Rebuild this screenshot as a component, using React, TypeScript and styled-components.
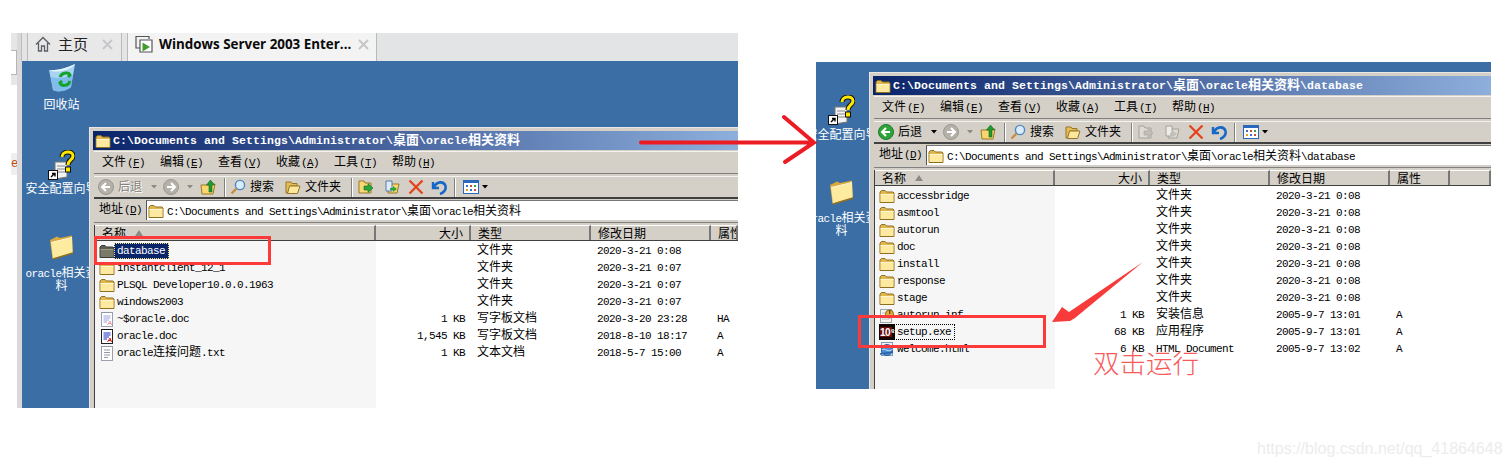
import React from "react";
import styled, { createGlobalStyle } from "styled-components";

const GlobalStyle = createGlobalStyle`
  html, body { margin: 0; padding: 0; background: #fff; }
  #root { width: 1510px; height: 467px; overflow: hidden; }
`;

const MONO = `"Liberation Mono", "DejaVu Sans Mono", monospace`;
const HAN = `"Noto Sans CJK SC", "Liberation Sans", sans-serif`;

const Page = styled.div`
  position: relative;
  width: 1510px;
  height: 467px;
  background: #fff;
  overflow: hidden;
  font-family: ${MONO};
  font-size: 11px;
  letter-spacing: -0.6px;
  color: #000;
`;

const Shot = styled.section<{ $x: number; $y: number; $w: number; $h: number }>`
  position: absolute;
  left: ${(p) => p.$x}px;
  top: ${(p) => p.$y}px;
  width: ${(p) => p.$w}px;
  height: ${(p) => p.$h}px;
  display: flex;
  overflow: hidden;
`;

const SideStrip = styled.aside`
  width: 11px;
  flex: none;
  display: flex;
  background: #d9d9d9;
`;
const SideColumn = styled.div`
  width: 6px;
  display: flex;
  flex-direction: column;
  background: #fff;
`;
const SidePart = styled.div<{ $h?: number; $kind: "gray" | "box" | "blank" | "hint" }>`
  height: ${(p) => (p.$h ? `${p.$h}px` : "auto")};
  flex: ${(p) => (p.$h ? "none" : "1")};
  box-sizing: border-box;
  overflow: hidden;
  background: ${(p) => (p.$kind === "gray" ? "#e6e6e6" : p.$kind === "hint" ? "#eeeeee" : "#fff")};
  border-right: ${(p) => (p.$kind === "box" ? "1px solid #b5b5b5" : "0")};
  border-top: ${(p) => (p.$kind === "box" ? "1px solid #b5b5b5" : "0")};
  border-bottom: ${(p) => (p.$kind === "box" ? "1px solid #b5b5b5" : "0")};
  line-height: 22px;
  color: #c04a10;
  font-size: 12px;
  text-align: right;
`;

const MainColumn = styled.div`
  flex: 1;
  min-width: 0;
  display: flex;
  flex-direction: column;
`;

const TabStrip = styled.nav`
  height: 28px;
  flex: none;
  display: flex;
  gap: 5px;
  padding-left: 5px;
  background: #e3e4e6;
  border-left: 1px solid #bdbdbd;
  margin-left: -1px;
`;
const Tab = styled.div<{ $active?: boolean }>`
  width: ${(p) => (p.$active ? 250 : 95)}px;
  box-sizing: border-box;
  display: flex;
  align-items: center;
  padding: 0 0 6px 7px;
  background: ${(p) => (p.$active ? "#f3f3f3" : "#e8e8e9")};
  border-left: 1px solid #b9b9b9;
  border-right: 1px solid #b9b9b9;
  letter-spacing: 0;
`;
const HomeLabel = styled.span`
  margin-left: 7px;
  width: 44px;
  font: 400 15px/18px ${HAN};
  color: #222;
`;
const ActiveLabel = styled.span`
  margin-left: 6px;
  width: 199px;
  white-space: nowrap;
  font: 700 13.4px/20px "Open Sans", "Liberation Sans", sans-serif;
  color: #0a0a0a;
`;

const Desktop = styled.div`
  position: relative;
  flex: 1;
  min-height: 0;
  background: #3a6ea5;
  overflow: hidden;
`;
const DesktopItem = styled.div<{ $x: number; $y: number }>`
  position: absolute;
  left: ${(p) => p.$x}px;
  top: ${(p) => p.$y}px;
  width: 75px;
  display: flex;
  flex-direction: column;
  align-items: center;
`;
const DesktopGlyph = styled.div<{ $shift: number }>`
  margin-right: ${(p) => p.$shift}px;
`;

const Explorer = styled.div<{ $x: number; $y: number }>`
  position: absolute;
  left: ${(p) => p.$x}px;
  top: ${(p) => p.$y}px;
  right: 0;
  bottom: 0;
  box-sizing: border-box;
  padding: 3px 0 0 3px;
  display: flex;
  flex-direction: column;
  background: #d4d0c8;
  border-top: 1px solid #e8e8e8;
  border-left: 1px solid #e8e8e8;
`;
const TitleBar = styled.header`
  height: 19px;
  flex: none;
  box-sizing: border-box;
  margin-bottom: 1px;
  display: flex;
  align-items: center;
  gap: 2px;
  padding-left: 2px;
  background: linear-gradient(to right, #0a246a, #8eafdc);
  color: #fff;
  font-weight: 700;
  font-size: 11.5px;
  letter-spacing: 0.1px;
  white-space: nowrap;
`;
const Bars = styled.div`
  flex: 1;
  min-height: 0;
  margin-left: 1px;
  display: flex;
  flex-direction: column;
`;
const MenuBar = styled.div`
  height: 23px;
  flex: none;
  box-sizing: border-box;
  margin-bottom: 2px;
  padding-left: 8px;
  display: flex;
  align-items: center;
  border-top: 1px solid #f4f3ef;
  border-bottom: 1px solid #808080;
`;
const MenuItem = styled.span`
  width: 58px;
  flex: none;
  white-space: nowrap;
`;
const Accel = styled.span`
  margin-left: 1px;
  & u { text-underline-offset: 1px; }
`;
const Toolbar = styled.div`
  height: 23px;
  flex: none;
  box-sizing: border-box;
  padding-left: 4px;
  display: flex;
  align-items: center;
  border-top: 1px solid #f4f3ef;
  border-bottom: 2px solid #404040;
`;
const ToolSlot = styled.span<{ $ml: number }>`
  display: flex;
  align-items: center;
  flex: none;
  margin-left: ${(p) => p.$ml}px;
`;
const ToolLabel = styled.span<{ $ml: number; $off?: boolean }>`
  flex: none;
  margin: 1px 0 0 ${(p) => p.$ml}px;
  color: ${(p) => (p.$off ? "#85827a" : "#000")};
  text-shadow: ${(p) => (p.$off ? "1px 1px 0 #fff" : "none")};
`;
const ToolSep = styled.span<{ $ml: number }>`
  width: 2px;
  height: 19px;
  flex: none;
  margin-left: ${(p) => p.$ml}px;
  background: linear-gradient(to right, #808080 50%, #fff 50%);
`;
const AddressBar = styled.div`
  height: 23px;
  flex: none;
  margin-bottom: 3px;
  display: flex;
  border-bottom: 1px solid #808080;
  box-sizing: content-box;
`;
const AddressLabel = styled.span`
  width: 47px;
  flex: none;
  padding-left: 5px;
  line-height: 23px;
  white-space: nowrap;
`;
const AddressInput = styled.div`
  flex: 1;
  margin: 1px 0 2px;
  display: flex;
  align-items: center;
  gap: 3px;
  padding-left: 1px;
  background: #fff;
  border-left: 1px solid #555;
  border-top: 1px solid #777;
  white-space: nowrap;
`;
const AddressText = styled.span`
  padding-top: 2px;
`;
const ListPane = styled.div<{ $name: number }>`
  flex: 1;
  min-height: 0;
  margin-top: -1px;
  border-left: 1px solid #404040;
  display: flex;
  flex-direction: column;
  background: linear-gradient(to right, #f6f6f6 ${(p) => p.$name}px, #fff ${(p) => p.$name}px);
`;
const HeaderRow = styled.div<{ $cols: string }>`
  height: 16px;
  flex: none;
  margin-bottom: 1px;
  display: grid;
  grid-template-columns: ${(p) => p.$cols};
  background: #d4d0c8;
  border-bottom: 1px solid #404040;
  box-sizing: border-box;
`;
const HeaderCell = styled.div<{ $align?: "right" }>`
  box-sizing: border-box;
  display: flex;
  align-items: center;
  gap: 9px;
  overflow: hidden;
  white-space: nowrap;
  padding: 0 6px 0 7px;
  justify-content: ${(p) => (p.$align === "right" ? "flex-end" : "flex-start")};
  border-top: 1px solid #fff;
  border-right: 2px solid #777;
  line-height: 14px;
`;
const Row = styled.div<{ $cols: string }>`
  height: 17px;
  flex: none;
  display: grid;
  grid-template-columns: ${(p) => p.$cols};
  align-items: center;
  white-space: nowrap;
`;
const NameCell = styled.div`
  display: flex;
  align-items: center;
  padding-left: 4px;
  min-width: 0;
`;
const NameLabel = styled.span<{ $state?: "selected" | "focus" }>`
  margin-left: -1px;
  padding: 0 3px 0 2px;
  line-height: 14px;
  border: 1px ${(p) => (p.$state ? "dotted" : "solid")}
    ${(p) => (p.$state === "selected" ? "#f2e27a" : p.$state === "focus" ? "#000" : "transparent")};
  background: ${(p) => (p.$state === "selected" ? "#0a246a" : "transparent")};
  color: ${(p) => (p.$state === "selected" ? "#fff" : "#000")};
`;
const SizeCell = styled.div`
  text-align: right;
  padding-right: 6px;
`;
const TextCell = styled.div`
  padding-left: 6px;
`;
const HanRun = styled.span<{ $size?: number }>`
  font-family: ${HAN};
  font-size: ${(p) => p.$size ?? 12}px;
  letter-spacing: 0;
  line-height: 0;
`;
const DesktopLabel = styled.div<{ $gap: number }>`
  margin-top: ${(p) => p.$gap}px;
  width: 75px;
  color: #fff;
  text-align: center;
  line-height: 12.5px;
`;

const Highlight = styled.div<{ $x: number; $y: number; $w: number; $h: number }>`
  position: absolute;
  left: ${(p) => p.$x}px;
  top: ${(p) => p.$y}px;
  width: ${(p) => p.$w}px;
  height: ${(p) => p.$h}px;
  box-sizing: border-box;
  border: 3px solid #fc3a3a;
`;
const Overlay = styled.svg`
  position: absolute;
  left: 0;
  top: 0;
  pointer-events: none;
`;
const Note = styled.div`
  position: absolute;
  left: 1093px;
  top: 345px;
  font: 300 26.5px/34px ${HAN};
  letter-spacing: 0;
  color: #f85a5a;
`;
const Watermark = styled.div`
  position: absolute;
  left: 1257px;
  top: 439px;
  font: 400 16px/20px "Liberation Sans", Arial, sans-serif;
  letter-spacing: 0;
  color: #ececec;
`;

const Mixed = ({ text, han }: { text: string; han?: number }) => (
  <>
    {text.split(/([\u4e00-\u9fff]+)/).map((part, i) =>
      /[\u4e00-\u9fff]/.test(part) ? (
        <HanRun key={i} $size={han}>
          {part}
        </HanRun>
      ) : (
        <React.Fragment key={i}>{part}</React.Fragment>
      )
    )}
  </>
);

const Svg = ({ s = 16, h, children }: { s?: number; h?: number; children: React.ReactNode }) => (
  <svg width={s} height={h ?? s} viewBox={`0 0 ${s} ${h ?? s}`} style={{ flex: "none", display: "block" }}>
    {children}
  </svg>
);

const Folder = ({ dark }: { dark?: boolean }) => (
  <Svg>
    <path d="M1 4 2.5 2.5H6L7.5 4H14L15 5V14.5H1Z" fill={dark ? "#5d5d52" : "#e2b64e"} stroke={dark ? "#3a3a36" : "#8f7020"} />
    <path d="M1.5 6.5H14.5V14H1.5Z" fill={dark ? "#7b7a68" : "#fde9a0"} />
    <path d="M1.5 6.5H14.5" stroke={dark ? "#9a9a88" : "#fff6cf"} />
    <path d="M1 14.5H15" stroke={dark ? "#3a3a36" : "#8f7020"} />
  </Svg>
);
const BigFolder = () => (
  <Svg s={26}>
    <path d="M2 6 9 2.5 12 4 24 1.5 25 19 4.5 25Z" fill="#d9a93c" />
    <path d="M3 8.5 24 3.5 24.5 18.5 5 24.5Z" fill="#fdeb9f" />
    <path d="M3 8.5 24 3.5" stroke="#fff8d6" />
    <path d="M5 25 25 19" stroke="#927022" strokeWidth="1.4" />
  </Svg>
);
const Recycle = () => (
  <Svg s={30} h={30}>
    <path d="M2 7C8 8 20 5 28 1L24 24C20 28 10 30 6 27Z" fill="#a9d3f3" />
    <path d="M2 7C8 8 20 5 28 1 25 7 8 11 2 7Z" fill="#e6f4fd" />
    <path d="M6 27C10 30 20 28 24 24L26 12C18 15 10 16 4 14Z" fill="#6fb2e8" opacity=".7" />
    <path d="M13 14C15 9 22 9 23 12L21 14M23 18C21 24 14 23 13 20L15 18" fill="none" stroke="#12a32b" strokeWidth="3" />
  </Svg>
);
const Security = () => (
  <Svg s={28} h={31}>
    <path d="M8 12H20V27L8 29Z" fill="#f3f3f3" stroke="#777" />
    <path d="M10 16H18M10 19H18M10 22H18" stroke="#888" />
    <path d="M15 7C15 1 26 0 26 6C26 10 21 10 21 15" fill="none" stroke="#111" strokeWidth="5" />
    <path d="M15 7C15 1 26 0 26 6C26 10 21 10 21 15" fill="none" stroke="#ffe800" strokeWidth="3" />
    <rect x="18.5" y="17" width="5" height="5" fill="#ffe800" stroke="#111" />
    <rect x="1.5" y="20.5" width="9" height="9" fill="#fff" stroke="#111" />
    <path d="M4 27 7.5 23.5M5 23.5H8V26.5" fill="none" stroke="#000" strokeWidth="1.4" />
  </Svg>
);
const NavCircle = ({ on, flip }: { on?: boolean; flip?: boolean }) => (
  <Svg>
    <circle cx="8" cy="8" r="7.5" fill={on ? "#2fa33a" : "#b4b1a9"} stroke={on ? "#1d7a28" : "#9a978f"} />
    <path
      d={flip ? "M8 4 12 8 8 12M12 8H4" : "M8 4 4 8 8 12M4 8H12"}
      fill="none"
      stroke="#fff"
      strokeWidth="2"
    />
  </Svg>
);
const Caret = ({ off }: { off?: boolean }) => (
  <Svg s={6} h={4}>
    <path d="M0 0H6L3 3.5Z" fill={off ? "#8d8a82" : "#000"} />
  </Svg>
);
const UpFolder = () => (
  <Svg>
    <path d="M1 6H9L15 5 13 15H2Z" fill="#f9d66f" stroke="#9a7a22" />
    <path d="M9 13V6H6.500L10.500 1 14.500 6H12V13Z" fill="#1f9c30" stroke="#0f6a1c" strokeWidth=".6" />
  </Svg>
);
const Search = () => (
  <Svg>
    <circle cx="10" cy="6" r="4.6" fill="#d8ecfb" stroke="#4f86c4" strokeWidth="1.4" />
    <path d="M6.500 9.500 1.500 14.500" stroke="#c68d3f" strokeWidth="2.4" />
  </Svg>
);
const Folders = () => (
  <Svg>
    <path d="M1 3H6L7 4.500H12V7H5L3 14H1Z" fill="#e6bd55" stroke="#95762a" />
    <path d="M4.500 7H15L12.500 14.500H2.500Z" fill="#fde79a" stroke="#95762a" />
  </Svg>
);
const MoveTo = ({ off }: { off?: boolean }) => (
  <Svg>
    <path d="M1 2H6L7 4H13V14H1Z" fill={off ? "#dedbd4" : "#f7d873"} stroke={off ? "#a5a29a" : "#98782a"} />
    <path d="M6 7H10V4.500L15 9 10 13.500V11H6Z" fill={off ? "#c2bfb7" : "#2aa53a"} stroke={off ? "#a5a29a" : "#116f20"} strokeWidth=".6" />
  </Svg>
);
const CopyTo = ({ off }: { off?: boolean }) => (
  <Svg>
    <path d="M6 5H15L13 14H4Z" fill={off ? "#dedbd4" : "#f7d873"} stroke={off ? "#a5a29a" : "#98782a"} />
    <path d="M2 2H8V12H2Z" fill={off ? "#eeece7" : "#dfeafa"} stroke={off ? "#a5a29a" : "#5c78a8"} />
    <path d="M6 9H9V7L13 10 9 13V11H6Z" fill={off ? "#c2bfb7" : "#2aa53a"} />
  </Svg>
);
const Delete = () => (
  <Svg>
    <path d="M1.500 1.500 14.500 14.500M14.500 1.500 1.500 14.500" stroke="#e4421c" strokeWidth="2.3" />
  </Svg>
);
const Undo = () => (
  <Svg>
    <path d="M2 3V9H8" fill="none" stroke="#1668c8" strokeWidth="2.4" />
    <path d="M3 8C6 2 13 2 14.500 7C15.500 11 12 14 9 15" fill="none" stroke="#1668c8" strokeWidth="2.6" />
  </Svg>
);
const Views = () => (
  <Svg>
    <rect x=".5" y="1.5" width="15" height="13" fill="#fff" stroke="#2a68bd" />
    <rect x="1" y="2" width="14" height="2" fill="#2a68bd" />
    <rect x="3" y="6" width="2" height="2" fill="#3a6fd0" />
    <rect x="7" y="6" width="2" height="2" fill="#d04a3a" />
    <rect x="11" y="6" width="2" height="2" fill="#3a9f4a" />
    <rect x="3" y="10" width="2" height="2" fill="#e0a030" />
    <rect x="7" y="10" width="2" height="2" fill="#3a6fd0" />
    <rect x="11" y="10" width="2" height="2" fill="#d04a3a" />
  </Svg>
);
const DocIcon = ({ kind }: { kind: "temp" | "word" | "text" }) => (
  <Svg>
    <rect x="2.5" y="1.5" width="11" height="14" fill="#fff" stroke={kind === "word" ? "#222" : "#9aa0ad"} />
    <path d="M3 1.500H13" stroke={kind === "word" ? "#000" : "#8a8f9a"} strokeDasharray="1 1" />
    {kind === "text" ? (
      <path d="M5 5H11M5 7.500H11M5 10H11M5 12.500H9" stroke="#8f97a8" />
    ) : (
      <>
        <path d="M4.500 5H11.500M4.500 7H11.500M4.500 9H10M4.500 11H8" stroke={kind === "word" ? "#1426c8" : "#9aa4e0"} />
        <path d="M8.500 14 11 10 12.500 14M9.500 12.500H12" fill="none" stroke={kind === "word" ? "#e01818" : "#ef9a9a"} />
      </>
    )}
  </Svg>
);
const InfIcon = () => (
  <Svg>
    <rect x="1.5" y="2.5" width="11" height="13" fill="#f7f7f2" stroke="#a0a4ac" />
    <path d="M3 6H10M3 9H9M3 12H10" stroke="#b9bdc6" />
    <circle cx="10.5" cy="7" r="4" fill="#e7b23b" stroke="#8b6a1a" />
    <rect x="10" y="3" width="1.4" height="4" fill="#6a4f10" />
  </Svg>
);
const SetupIcon = () => (
  <Svg>
    <rect width="16" height="16" fill="#140505" />
    <rect x="1" y="3" width="12" height="10" fill="#8a1010" opacity=".75" />
    <text x="1" y="12" fontFamily="Liberation Sans, sans-serif" fontSize="10" fontWeight="700" fill="#fff" letterSpacing="-.5">
      10
    </text>
    <text x="12" y="8" fontFamily="Liberation Sans, sans-serif" fontSize="6" fontWeight="700" fill="#fff" letterSpacing="0">
      g
    </text>
  </Svg>
);
const HtmlIcon = () => (
  <Svg>
    <rect x="2.5" y="1.5" width="11" height="13" fill="#eef3fb" stroke="#8097bc" />
    <circle cx="8" cy="9" r="5.5" fill="#4c8ed8" stroke="#2a5fa8" />
    <path d="M3 9C6 6 10 13 13.500 8" stroke="#cfe6fb" fill="none" />
    <path d="M1 13 14 11" stroke="#2a5fa8" strokeWidth="1.6" />
  </Svg>
);
const HomeGlyph = () => (
  <Svg>
    <path d="M1 8.500 8 1.500 15 8.500M3.500 7V15H6.500V10H9.500V15H12.500V7" fill="none" stroke="#5a5f66" strokeWidth="1.3" />
  </Svg>
);
const VmGlyph = () => (
  <Svg s={18}>
    <path d="M5 13H1V1.500H14V4" fill="none" stroke="#555" strokeWidth="1.2" />
    <path d="M5 5H17V17H5Z" fill="#fff" stroke="#555" strokeWidth="1.2" />
    <path d="M7.500 7.500 15 12 7.500 16.500Z" fill="#3f9f2d" />
  </Svg>
);
const CloseX = () => (
  <Svg s={11}>
    <path d="M1 1 10 10M10 1 1 10" stroke="#c5c6c8" strokeWidth="1.8" />
  </Svg>
);
const SortUp = () => (
  <Svg s={8} h={6}>
    <path d="M4 0 8 6H0Z" fill="#8c8a84" />
  </Svg>
);

type FileRow = {
  icon: React.ReactNode;
  name: string;
  size?: string;
  type: string;
  date: string;
  attr?: string;
  state?: "selected" | "focus";
};

const MENU: [string, string][] = [
  ["文件", "F"],
  ["编辑", "E"],
  ["查看", "V"],
  ["收藏", "A"],
  ["工具", "T"],
  ["帮助", "H"],
];

const Window = ({
  x,
  y,
  path,
  cols,
  nameWidth,
  extraHeader,
  rows,
  ready,
}: {
  x: number;
  y: number;
  path: string;
  cols: string;
  nameWidth: number;
  extraHeader?: boolean;
  rows: FileRow[];
  ready?: boolean;
}) => (
  <Explorer $x={x} $y={y}>
    <TitleBar>
      <Folder />
      <span>
        <Mixed text={path} han={13} />
      </span>
    </TitleBar>
    <Bars>
      <MenuBar>
        {MENU.map(([label, key]) => (
          <MenuItem key={key}>
            <HanRun>{label}</HanRun>
            <Accel>
              (<u>{key}</u>)
            </Accel>
          </MenuItem>
        ))}
      </MenuBar>
      <Toolbar>
        <ToolSlot $ml={0}>
          <NavCircle on={ready} />
        </ToolSlot>
        <ToolLabel $ml={4} $off={!ready}>
          <HanRun>后退</HanRun>
        </ToolLabel>
        <ToolSlot $ml={9}>
          <Caret off={!ready} />
        </ToolSlot>
        <ToolSlot $ml={6}>
          <NavCircle flip />
        </ToolSlot>
        <ToolSlot $ml={8}>
          <Caret off />
        </ToolSlot>
        <ToolSlot $ml={7}>
          <UpFolder />
        </ToolSlot>
        <ToolSep $ml={8} />
        <ToolSlot $ml={4}>
          <Search />
        </ToolSlot>
        <ToolLabel $ml={4}>
          <HanRun>搜索</HanRun>
        </ToolLabel>
        <ToolSlot $ml={11}>
          <Folders />
        </ToolSlot>
        <ToolLabel $ml={4}>
          <HanRun>文件夹</HanRun>
        </ToolLabel>
        <ToolSep $ml={10} />
        <ToolSlot $ml={5}>
          <MoveTo off={ready} />
        </ToolSlot>
        <ToolSlot $ml={10}>
          <CopyTo off={ready} />
        </ToolSlot>
        <ToolSlot $ml={8}>
          <Delete />
        </ToolSlot>
        <ToolSlot $ml={7}>
          <Undo />
        </ToolSlot>
        <ToolSep $ml={7} />
        <ToolSlot $ml={7}>
          <Views />
        </ToolSlot>
        <ToolSlot $ml={3}>
          <Caret />
        </ToolSlot>
      </Toolbar>
      <AddressBar>
        <AddressLabel>
          <HanRun>地址</HanRun>
          <Accel>
            (<u>D</u>)
          </Accel>
        </AddressLabel>
        <AddressInput>
          <Folder />
          <AddressText>
            <Mixed text={path} />
          </AddressText>
        </AddressInput>
      </AddressBar>
      <ListPane $name={nameWidth}>
        <HeaderRow $cols={cols}>
          <HeaderCell>
            <HanRun>名称</HanRun>
            <SortUp />
          </HeaderCell>
          <HeaderCell $align="right">
            <HanRun>大小</HanRun>
          </HeaderCell>
          <HeaderCell>
            <HanRun>类型</HanRun>
          </HeaderCell>
          <HeaderCell>
            <HanRun>修改日期</HanRun>
          </HeaderCell>
          <HeaderCell>
            <HanRun>属性</HanRun>
          </HeaderCell>
          {extraHeader && <HeaderCell />}
        </HeaderRow>
        {rows.map((r) => (
          <Row key={r.name} $cols={cols}>
            <NameCell>
              {r.icon}
              <NameLabel $state={r.state}>
                <Mixed text={r.name} />
              </NameLabel>
            </NameCell>
            <SizeCell>{r.size}</SizeCell>
            <TextCell>
              <Mixed text={r.type} />
            </TextCell>
            <TextCell>{r.date}</TextCell>
            <TextCell>{r.attr}</TextCell>
          </Row>
        ))}
      </ListPane>
    </Bars>
  </Explorer>
);

const LEFT_ROWS: FileRow[] = [
  { icon: <Folder dark />, name: "database", type: "文件夹", date: "2020-3-21 0:08", state: "selected" },
  { icon: <Folder />, name: "instantclient_12_1", type: "文件夹", date: "2020-3-21 0:07" },
  { icon: <Folder />, name: "PLSQL Developer10.0.0.1963", type: "文件夹", date: "2020-3-21 0:07" },
  { icon: <Folder />, name: "windows2003", type: "文件夹", date: "2020-3-21 0:07" },
  { icon: <DocIcon kind="temp" />, name: "~$oracle.doc", size: "1 KB", type: "写字板文档", date: "2020-3-20 23:28", attr: "HA" },
  { icon: <DocIcon kind="word" />, name: "oracle.doc", size: "1,545 KB", type: "写字板文档", date: "2018-8-10 18:17", attr: "A" },
  { icon: <DocIcon kind="text" />, name: "oracle连接问题.txt", size: "1 KB", type: "文本文档", date: "2018-5-7 15:00", attr: "A" },
];

const folderRow = (name: string): FileRow => ({ icon: <Folder />, name, type: "文件夹", date: "2020-3-21 0:08" });
const RIGHT_ROWS: FileRow[] = [
  ...["accessbridge", "asmtool", "autorun", "doc", "install", "response", "stage"].map(folderRow),
  { icon: <InfIcon />, name: "autorun.inf", size: "1 KB", type: "安装信息", date: "2005-9-7 13:01", attr: "A" },
  { icon: <SetupIcon />, name: "setup.exe", size: "68 KB", type: "应用程序", date: "2005-9-7 13:01", attr: "A", state: "focus" },
  { icon: <HtmlIcon />, name: "welcome.html", size: "6 KB", type: "HTML Document", date: "2005-9-7 13:02", attr: "A" },
];

export default function App() {
  return (
    <Page>
      <GlobalStyle />
      <Shot $x={11} $y={33} $w={727} $h={375}>
        <SideStrip>
          <SideColumn>
            <SidePart $kind="gray" $h={17} />
            <SidePart $kind="box" $h={25} />
            <SidePart $kind="gray" $h={10} />
            <SidePart $kind="blank" $h={68} />
            <SidePart $kind="hint" $h={22}>
              e
            </SidePart>
            <SidePart $kind="blank" />
          </SideColumn>
        </SideStrip>
        <MainColumn>
          <TabStrip>
            <Tab>
              <HomeGlyph />
              <HomeLabel>主页</HomeLabel>
              <CloseX />
            </Tab>
            <Tab $active>
              <VmGlyph />
              <ActiveLabel>Windows Server 2003 Enter...</ActiveLabel>
              <CloseX />
            </Tab>
          </TabStrip>
          <Desktop>
            <DesktopItem $x={2} $y={2}>
              <Recycle />
              <DesktopLabel $gap={7}>
                <HanRun>回收站</HanRun>
              </DesktopLabel>
            </DesktopItem>
            <DesktopItem $x={2} $y={89}>
              <DesktopGlyph $shift={2}>
                <Security />
              </DesktopGlyph>
              <DesktopLabel $gap={3}>
                <HanRun>安全配置向导</HanRun>
              </DesktopLabel>
            </DesktopItem>
            <DesktopItem $x={2} $y={173}>
              <DesktopGlyph $shift={2}>
                <BigFolder />
              </DesktopGlyph>
              <DesktopLabel $gap={8}>
                <Mixed text="oracle相关资料" />
              </DesktopLabel>
            </DesktopItem>
            <Window
              x={67}
              y={66}
              path="C:\Documents and Settings\Administrator\桌面\oracle相关资料"
              cols="281px 95px 120px 120px 1fr"
              nameWidth={281}
              rows={LEFT_ROWS}
            />
          </Desktop>
        </MainColumn>
      </Shot>

      <Shot $x={816} $y={62} $w={675} $h={327}>
        <Desktop>
          <DesktopItem $x={-12} $y={33}>
            <DesktopGlyph $shift={2}>
              <Security />
            </DesktopGlyph>
            <DesktopLabel $gap={4}>
              <HanRun>安全配置向导</HanRun>
            </DesktopLabel>
          </DesktopItem>
          <DesktopItem $x={-12} $y={117}>
            <DesktopGlyph $shift={2}>
              <BigFolder />
            </DesktopGlyph>
            <DesktopLabel $gap={8}>
              <Mixed text="oracle相关资料" />
            </DesktopLabel>
          </DesktopItem>
          <Window
            x={53}
            y={10}
            path="C:\Documents and Settings\Administrator\桌面\oracle相关资料\database"
            cols="180px 95px 120px 120px 60px 1fr"
            nameWidth={180}
            extraHeader
            rows={RIGHT_ROWS}
            ready
          />
        </Desktop>
      </Shot>

      <Highlight $x={94} $y={236} $w={177} $h={29} />
      <Highlight $x={858} $y={315} $w={188} $h={33} />
      <Overlay width="1510" height="467" viewBox="0 0 1510 467">
        <path d="M641 142.500H814M784 117 814 142.500 785 162" fill="none" stroke="#ed1c24" strokeWidth="4" strokeLinecap="round" />
        <path d="M1052 322 1062 307 1069 312 1143 262 1075 318 1070 321Z" fill="#f73b3b" />
      </Overlay>
      <Note>双击运行</Note>
      <Watermark>https://blog.csdn.net/qq_41864648</Watermark>
    </Page>
  );
}
